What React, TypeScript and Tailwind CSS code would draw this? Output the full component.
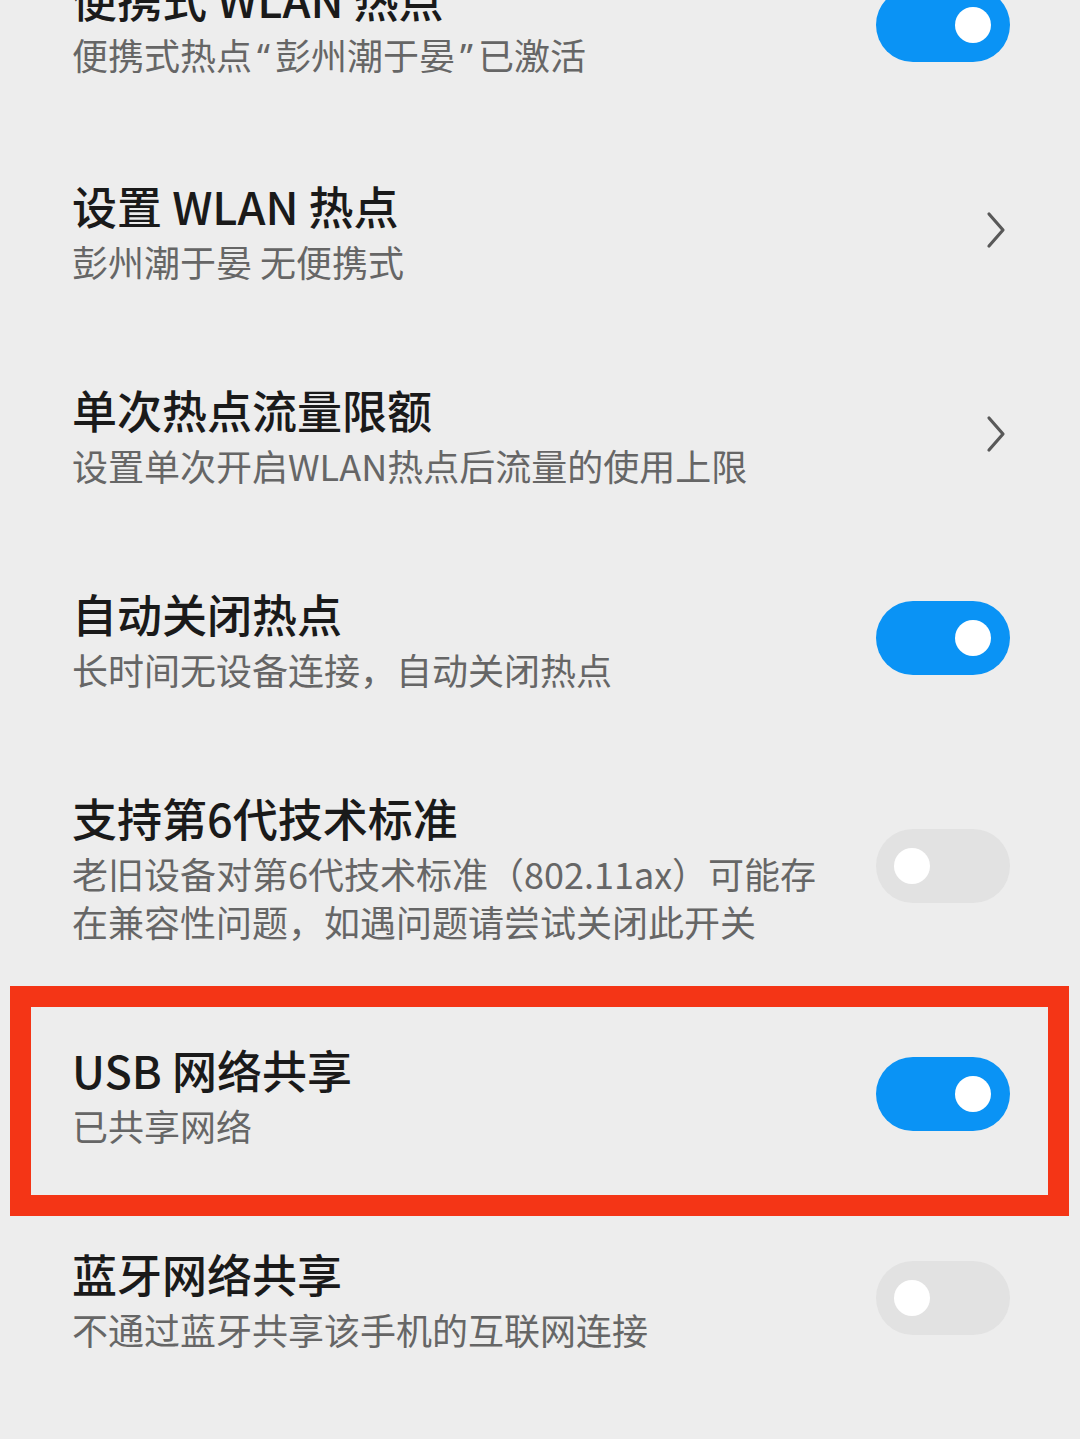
import React from "react";

type Row = {
  title: string;
  sub: React.ReactNode[];
  kind: "on" | "off" | "chevron";
  boxed?: boolean;
};

const q = "font-['Noto_Sans'] px-[5px]";

const rows: Row[] = [
  {
    title: "便携式 WLAN 热点",
    sub: [
      <>
        便携式热点<span className={q}>“</span>彭州潮于晏<span className={q}>”</span>已激活
      </>,
    ],
    kind: "on",
  },
  { title: "设置 WLAN 热点", sub: ["彭州潮于晏 无便携式"], kind: "chevron" },
  { title: "单次热点流量限额", sub: ["设置单次开启WLAN热点后流量的使用上限"], kind: "chevron" },
  { title: "自动关闭热点", sub: ["长时间无设备连接，自动关闭热点"], kind: "on" },
  {
    title: "支持第6代技术标准",
    sub: ["老旧设备对第6代技术标准（802.11ax）可能存", "在兼容性问题，如遇问题请尝试关闭此开关"],
    kind: "off",
  },
  { title: "USB 网络共享", sub: ["已共享网络"], kind: "on", boxed: true },
  { title: "蓝牙网络共享", sub: ["不通过蓝牙共享该手机的互联网连接"], kind: "off" },
];

function Toggle({ on }: { on: boolean }) {
  return (
    <div
      className={
        on
          ? "flex h-[74px] w-[134px] items-center justify-end rounded-full bg-[#0a93f5] pr-[19px]"
          : "flex h-[74px] w-[134px] items-center justify-start rounded-full bg-[#e2e2e2] pl-[18px]"
      }
    >
      <div className="h-[36px] w-[36px] rounded-full bg-white" />
    </div>
  );
}

function Chevron() {
  return (
    <svg width="24" height="40" viewBox="0 0 24 40" className="mr-[2px]">
      <path d="M5 4 L19 20 L5 36" fill="none" stroke="#595959" strokeWidth="3.2" strokeLinecap="round" strokeLinejoin="round" />
    </svg>
  );
}

function Item({ row }: { row: Row }) {
  return (
    <div className="relative flex items-center pl-[72px] pr-[70px] py-[47.5px]">
      {row.boxed && (
        <div className="pointer-events-none absolute left-[10px] right-[11px] top-[-6.5px] bottom-[-20px] border-[21px] border-[#f43516]" />
      )}
      <div className="flex flex-1 flex-col">
        <div className="text-[45px] leading-[60px] font-medium text-[#1a1a1a]">{row.title}</div>
        <div className="mt-[1px] text-[36px] leading-[48px] text-[#666666]">
          {row.sub.map((s, i) => (
            <div key={i}>{s}</div>
          ))}
        </div>
      </div>
      <div className="ml-6 flex shrink-0 items-center">
        {row.kind === "chevron" ? <Chevron /> : <Toggle on={row.kind === "on"} />}
      </div>
    </div>
  );
}

export default function App() {
  return (
    <main
      className="h-[1439px] overflow-hidden bg-[#ededed]"
      style={{ fontFamily: '"Noto Sans CJK SC", "Noto Sans", sans-serif' }}
    >
      <div className="mt-[-79px] flex flex-col">
        {rows.map((r) => (
          <Item key={r.title} row={r} />
        ))}
      </div>
    </main>
  );
}
